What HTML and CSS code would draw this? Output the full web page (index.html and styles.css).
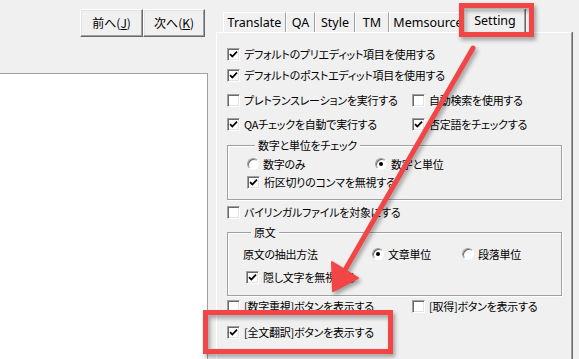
FILE: index.html
```html
<!DOCTYPE html>
<html lang="ja">
<head>
<meta charset="utf-8">
<link rel="stylesheet" href="styles.css">
</head>
<body>
<div class="app">
  <div class="left">
    <div class="btns">
      <div class="btn b1">前へ(<u>J</u>)</div>
      <div class="btn b2">次へ(<u>K</u>)</div>
    </div>
    <div class="list"></div>
  </div>
  <div class="right">
    <div class="tabs">
      <div class="tab t-tr">Translate</div>
      <div class="tab t-qa">QA</div>
      <div class="tab t-st">Style</div>
      <div class="tab t-tm">TM</div>
      <div class="tab t-ms">Memsource</div>
      <div class="tab sel">Setting</div>
    </div>
    <div class="panel">
      <div class="row r1"><span class="cb on"><svg viewBox="0 0 11 11"><path d="M2 5.2 L4.3 7.5 L9 2.6"/></svg></span>デフォルトのプリエディット項目を使用する</div>
      <div class="row r2"><span class="cb on"><svg viewBox="0 0 11 11"><path d="M2 5.2 L4.3 7.5 L9 2.6"/></svg></span>デフォルトのポストエディット項目を使用する</div>
      <div class="row two r3">
        <div class="item c1"><span class="cb"></span>プレトランスレーションを実行する</div>
        <div class="item"><span class="cb"></span>自動検索を使用する</div>
      </div>
      <div class="row two r4">
        <div class="item c1"><span class="cb on"><svg viewBox="0 0 11 11"><path d="M2 5.2 L4.3 7.5 L9 2.6"/></svg></span>QAチェックを自動で実行する</div>
        <div class="item"><span class="cb on"><svg viewBox="0 0 11 11"><path d="M2 5.2 L4.3 7.5 L9 2.6"/></svg></span>否定語をチェックする</div>
      </div>
      <div class="group g1">
        <div class="legend">数字と単位をチェック</div>
        <div class="grow gr1">
          <div class="item gc1"><span class="rb"></span>数字のみ</div>
          <div class="item"><span class="rb on"></span>数字と単位</div>
        </div>
        <div class="grow gr2"><span class="cb on"><svg viewBox="0 0 11 11"><path d="M2 5.2 L4.3 7.5 L9 2.6"/></svg></span>桁区切りのコンマを無視する</div>
      </div>
      <div class="row r5"><span class="cb"></span>バイリンガルファイルを対象にする</div>
      <div class="group g2">
        <div class="legend">原文</div>
        <div class="grow gr3">
          <div class="item gc2">原文の抽出方法</div>
          <div class="item gc3"><span class="rb on"></span>文章単位</div>
          <div class="item"><span class="rb"></span>段落単位</div>
        </div>
        <div class="grow gr4"><span class="cb on"><svg viewBox="0 0 11 11"><path d="M2 5.2 L4.3 7.5 L9 2.6"/></svg></span>隠し文字を無視する</div>
      </div>
      <div class="row two r6">
        <div class="item c1"><span class="cb"></span>[数字重視]ボタンを表示する</div>
        <div class="item"><span class="cb"></span>[取得]ボタンを表示する</div>
      </div>
      <div class="row r7"><span class="cb on"><svg viewBox="0 0 11 11"><path d="M2 5.2 L4.3 7.5 L9 2.6"/></svg></span>[全文翻訳]ボタンを表示する</div>
    </div>
  </div>
  <svg class="overlay" width="579" height="359" viewBox="0 0 579 359">
    <g class="marks">
      <rect x="461.5" y="5.5" width="70" height="29" />
      <rect x="205.5" y="312.5" width="185" height="39" />
      <line x1="473" y1="48" x2="345" y2="270" />
      <polygon points="333,291 358,278 332,262" />
    </g>
  </svg>
</div>
</body>
</html>
```

FILE: styles.css
```css
* { box-sizing: border-box; }
html, body { margin: 0; padding: 0; }
body {
  width: 579px;
  height: 359px;
  overflow: hidden;
  background: #f0f0f0;
  font-family: "Noto Sans CJK JP", "Noto Sans", sans-serif;
  font-size: 11px;
  letter-spacing: -0.25px;
  color: #000;
  font-feature-settings: "palt" 1;
}
.app {
  position: relative;
  display: flex;
  width: 579px;
  height: 359px;
}
.left {
  width: 208px;
  display: flex;
  flex-direction: column;
}
.btns {
  display: flex;
  padding: 9px 0 0 80px;
}
.btn {
  height: 28px;
  display: flex;
  align-items: center;
  justify-content: center;
  background: #f0f0f0;
  border: 1px solid;
  border-color: #fff #696969 #696969 #fff;
  box-shadow: inset -1px -1px 0 #a0a0a0, inset 1px 1px 0 #e3e3e3;
  line-height: 1;
  font-size: 12px;
  letter-spacing: 0;
}
.b1 { width: 63px; }
.b2 { width: 62px; }
.btn u { text-underline-offset: 1px; }
.list {
  margin-top: 36px;
  flex: 1;
  background: #fff;
  border-top: 1px solid #a0a0a0;
  border-right: 1px solid #a0a0a0;
}
.right {
  margin-left: 8px;
  width: 356px;
  display: flex;
  flex-direction: column;
}
.tabs {
  height: 33px;
  display: flex;
  align-items: flex-end;
  padding-left: 7px;
  position: relative;
  z-index: 2;
  margin-bottom: -1px;
}
.tab {
  height: 20px;
  display: flex;
  align-items: center;
  justify-content: center;
  font-family: "Noto Sans", sans-serif;
  font-size: 12.5px;
  letter-spacing: 0;
  border-top: 1px solid #fff;
  border-left: 1px solid #fff;
  border-right: 1px solid #a0a0a0;
  box-shadow: 1px 0 0 #696969;
  margin-bottom: 1px;
}
.t-tr { width: 63px; }
.t-qa { width: 29px; }
.t-st { width: 40px; }
.t-tm { width: 34px; }
.t-ms { width: 78px; }
.tab.sel {
  width: 60px;
  height: 24px;
  margin-left: -2px;
  margin-bottom: 0;
  background: #f0f0f0;
  padding-bottom: 2px;
}
.panel {
  flex: 1;
  border-top: 1px solid #fff;
  border-left: 1px solid #fff;
  border-right: 1px solid #a0a0a0;
  box-shadow: 1px 0 0 #696969;
  padding: 11px 0 0 10px;
}
.row, .grow {
  display: flex;
  align-items: center;
  height: 20px;
  white-space: nowrap;
}
.two .c1 { width: 185px; }
.item { display: flex; align-items: center; white-space: nowrap; }
.r2 { margin-top: 1px; }
.r3 { margin-top: 5px; }
.r4 { margin-top: 4px; }
.cb {
  width: 13px;
  height: 13px;
  flex: none;
  margin-right: 4px;
  background: #fff;
  border: 1px solid;
  border-color: #a0a0a0 #fff #fff #a0a0a0;
  box-shadow: inset 1px 1px 0 #696969, inset -1px -1px 0 #e3e3e3;
  display: flex;
  align-items: center;
  justify-content: center;
}
.cb svg { width: 11px; height: 11px; display: block; }
.cb svg path { fill: none; stroke: #000; stroke-width: 1.8; }
.rb {
  width: 12px;
  height: 12px;
  flex: none;
  margin-right: 4px;
  border-radius: 50%;
  background: #fff;
  border: 1px solid;
  border-color: #a0a0a0 #fff #fff #a0a0a0;
  box-shadow: inset 1px 1px 0 #696969;
  position: relative;
}
.rb.on::after {
  content: "";
  position: absolute;
  left: 3px;
  top: 3px;
  width: 4px;
  height: 4px;
  border-radius: 50%;
  background: #000;
}
.group {
  width: 335px;
  border: 1px solid #a0a0a0;
  box-shadow: inset 1px 1px 0 #fff, 1px 1px 0 #fff;
}
.legend {
  width: fit-content;
  margin: -9px 0 0 8px;
  padding: 0 3px;
  line-height: 16px;
  height: 16px;
  background: #f0f0f0;
}
.g1 { margin-top: 11px; padding: 0 0 8px 19px; }
.gr1 { margin-top: 2px; height: 18px; }
.gr2 { height: 18px; }
.gc1 { width: 128px; }
.r5 { margin-top: 2px; }
.g2 { margin-top: 10px; padding: 0 0 8px 15px; }
.gr3 { margin-top: 4px; }
.gc2 { width: 129px; }
.gc3 { width: 90px; }
.gr4 { margin-top: 3px; margin-left: 3px; }
.r7 { margin-top: 6px; }
.overlay {
  position: absolute;
  left: 0;
  top: 0;
  z-index: 5;
  pointer-events: none;
}
.marks {
  filter: drop-shadow(2px 3px 2px rgba(0,0,0,0.35));
}
.marks rect { fill: none; stroke: #f24646; stroke-width: 5; }
.marks line { stroke: #f24646; stroke-width: 5; stroke-linecap: round; }
.marks polygon { fill: #f24646; stroke: #f24646; stroke-width: 2; stroke-linejoin: round; }
```
